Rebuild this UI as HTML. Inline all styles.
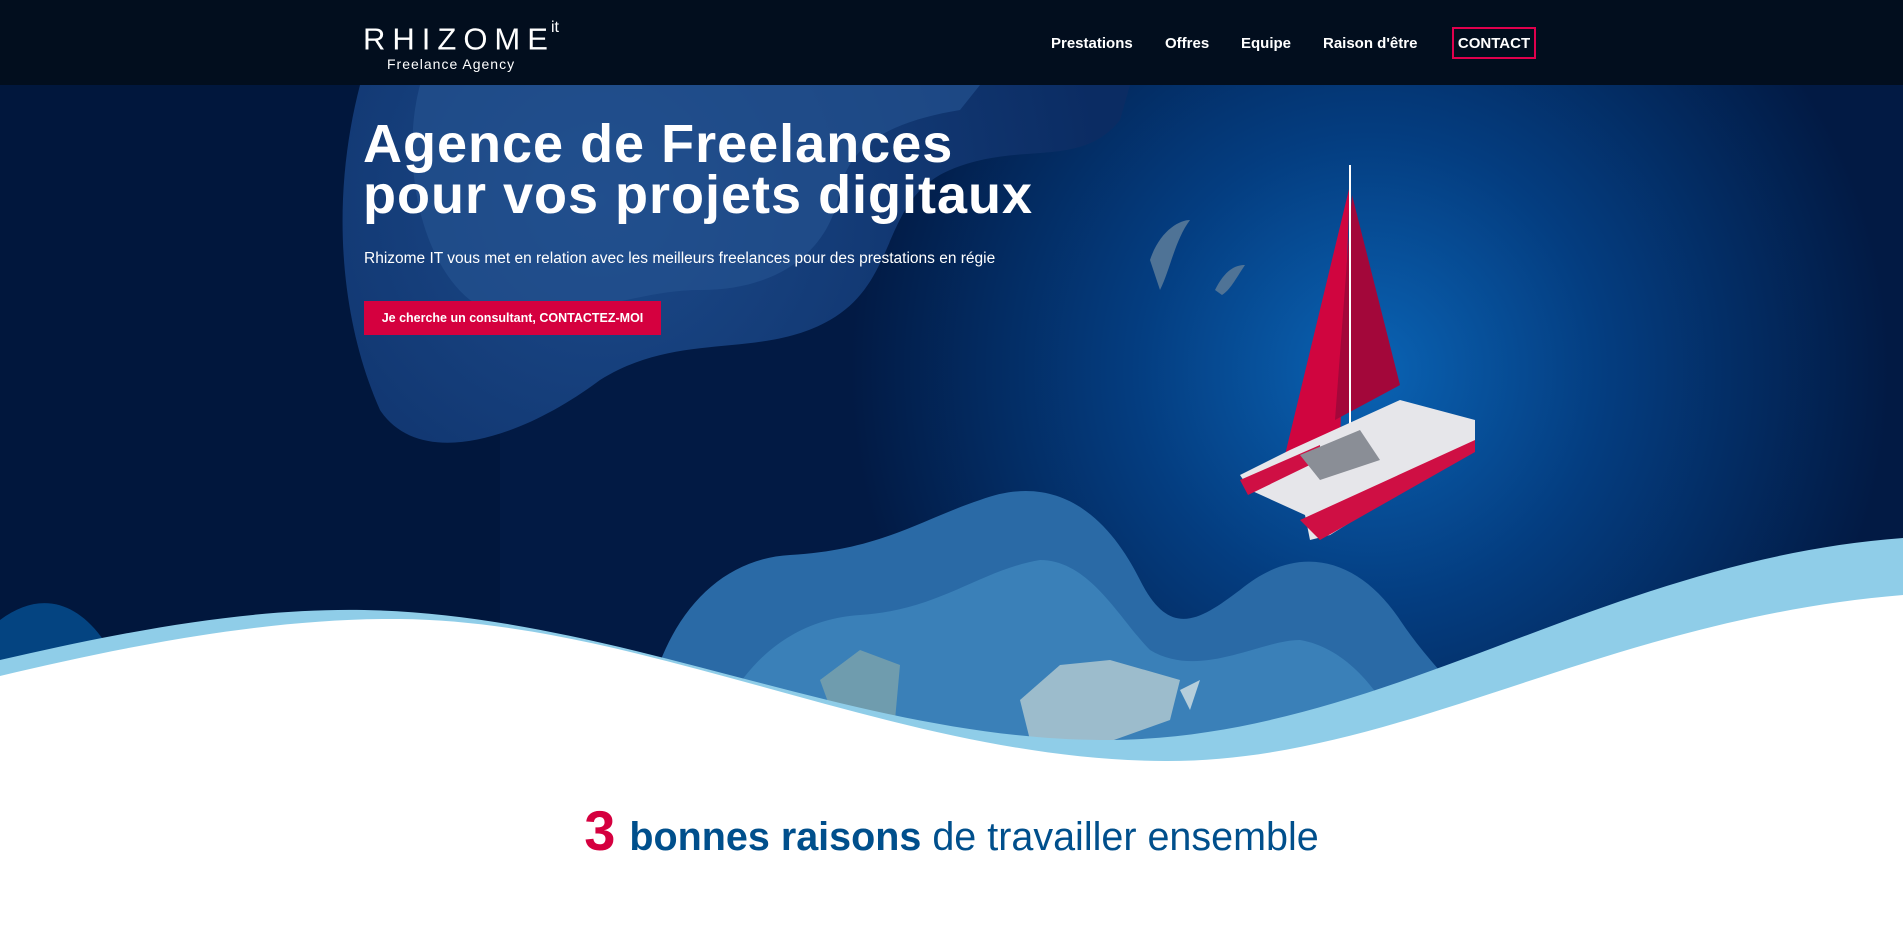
<!DOCTYPE html>
<html><head><meta charset="utf-8"><style>
*{margin:0;padding:0;box-sizing:border-box}
body{width:1903px;height:928px;overflow:hidden;background:#fff;font-family:"Liberation Sans",sans-serif;position:relative}
svg.bg{position:absolute;left:0;top:0}
.hdr{position:absolute;left:0;top:0;width:1903px;height:85px;background:#020e1e}
.logo{position:absolute;left:363px;top:16px;color:#fff}
.logo .r{font-size:31px;letter-spacing:7px;font-weight:400;line-height:36px}
.logo sup{font-size:16px;letter-spacing:0;position:relative;top:-6px;margin-left:-4px}
.logo .f{font-size:14px;letter-spacing:1px;margin-left:24px;margin-top:-1px}
.nav a{position:absolute;top:35px;color:#fff;font-weight:bold;font-size:15px;text-decoration:none}
.contact{position:absolute;left:1452px;top:27px;width:84px;height:32px;border:2px solid #e0004d;color:#fff;font-weight:bold;font-size:15px;text-align:center;line-height:29px}
h1{position:absolute;left:363px;top:119px;color:#fff;font-size:54px;line-height:51px;font-weight:bold;letter-spacing:1px}
.sub{position:absolute;left:364px;top:250px;color:#fff;font-size:15.5px}
.btn{position:absolute;left:364px;top:301px;width:297px;height:34px;background:#d5003f;color:#fff;font-weight:bold;font-size:12.5px;line-height:34px;text-align:center}
.h2{position:absolute;left:0;width:1903px;top:798px;text-align:center;color:#004f8c;font-size:39.5px}
.h2 .n{color:#d5003f;font-weight:bold;font-size:56px;margin-right:14px}
</style></head><body>
<svg class="bg" width="1903" height="928" viewBox="0 0 1903 928">
<defs>
<radialGradient id="g1" cx="1370" cy="370" r="520" gradientUnits="userSpaceOnUse">
<stop offset="0" stop-color="#0a63b4"/><stop offset="0.45" stop-color="#043d80"/><stop offset="1" stop-color="#021a44"/></radialGradient>
<radialGradient id="g2" cx="600" cy="200" r="500" gradientUnits="userSpaceOnUse">
<stop offset="0" stop-color="#1c4a8a"/><stop offset="1" stop-color="#0b2c63"/></radialGradient>
</defs>
<rect x="0" y="85" width="1903" height="700" fill="url(#g1)"/>
<rect x="0" y="85" width="500" height="700" fill="#021638" opacity="0.55"/>
<path d="M360 85 C330 200 340 320 380 410 C420 470 520 440 600 380 C680 330 760 360 830 320 C900 280 880 200 950 170 C1020 140 1080 170 1120 120 L1130 85 Z" fill="url(#g2)"/>
<path d="M420 85 C400 160 420 260 470 300 C540 340 620 290 700 290 C780 290 830 250 840 190 C850 140 900 120 960 110 L980 85 Z" fill="#24518f" opacity="0.7"/>
<path d="M640 780 C640 650 700 560 790 555 C880 550 920 520 980 500 C1060 470 1110 520 1140 580 C1170 640 1200 620 1240 590 C1300 540 1360 560 1400 620 C1440 680 1480 700 1500 780 Z" fill="#2a6aa6"/>
<path d="M700 780 C720 680 780 620 860 615 C940 610 980 570 1040 560 C1090 560 1120 620 1150 650 C1200 680 1260 640 1300 640 C1360 650 1400 720 1420 780 Z" fill="#3a80b8"/>
<path d="M0 620 C40 590 80 600 110 650 L110 700 L0 700 Z" fill="#044481"/>
<polygon points="820,680 860,650 900,665 895,720 840,735" fill="#6f9cae"/>
<polygon points="1020,700 1060,665 1110,660 1180,680 1170,720 1100,745 1030,740" fill="#9cbccc"/>
<polygon points="1180,690 1200,680 1190,710" fill="#b5cedb"/>
<path d="M1150 260 C1160 230 1180 220 1190 220 C1175 240 1170 270 1160 290 Z" fill="#4f7396"/>
<path d="M1215 290 C1225 270 1235 265 1245 265 C1235 280 1230 290 1222 295 Z" fill="#4f7396"/>
<polygon points="1350,185 1285,455 1340,440" fill="#d0053f"/>
<polygon points="1352,195 1400,385 1335,420" fill="#a3073a"/>
<line x1="1350" y1="165" x2="1350" y2="455" stroke="#fff" stroke-width="2"/>
<polygon points="1240,475 1290,450 1400,400 1475,420 1475,445 1330,535 1310,540 1305,515 1250,490" fill="#e6e6ea"/>
<polygon points="1300,520 1475,440 1475,452 1320,540" fill="#cf0f44"/>
<polygon points="1240,480 1320,445 1320,460 1248,495" fill="#cf0f44"/>
<polygon points="1300,455 1360,430 1380,460 1320,480" fill="#8a8e96"/>
<path d="M0 660 C130 630 250 608 364 610 C620 615 850 738 1100 740 C1380 742 1600 560 1903 538 L1903 928 L0 928 Z" fill="#8fcde8"/>
<path d="M0 676 C130 645 270 618 400 619 C650 622 900 760 1165 761 C1400 762 1600 620 1903 595 L1903 928 L0 928 Z" fill="#fff"/>
</svg>
<div class="hdr"></div>
<div class="logo"><div class="r">RHIZOME<sup>it</sup></div><div class="f">Freelance Agency</div></div>
<div class="nav"><a style="left:1051px">Prestations</a><a style="left:1165px">Offres</a><a style="left:1241px">Equipe</a><a style="left:1323px">Raison d'être</a></div>
<div class="contact">CONTACT</div>
<h1>Agence de Freelances<br>pour vos projets digitaux</h1>
<div class="sub">Rhizome IT vous met en relation avec les meilleurs freelances pour des prestations en régie</div>
<div class="btn">Je cherche un consultant, CONTACTEZ-MOI</div>
<div class="h2"><span class="n">3</span><b>bonnes raisons</b> de travailler ensemble</div>
</body></html>
